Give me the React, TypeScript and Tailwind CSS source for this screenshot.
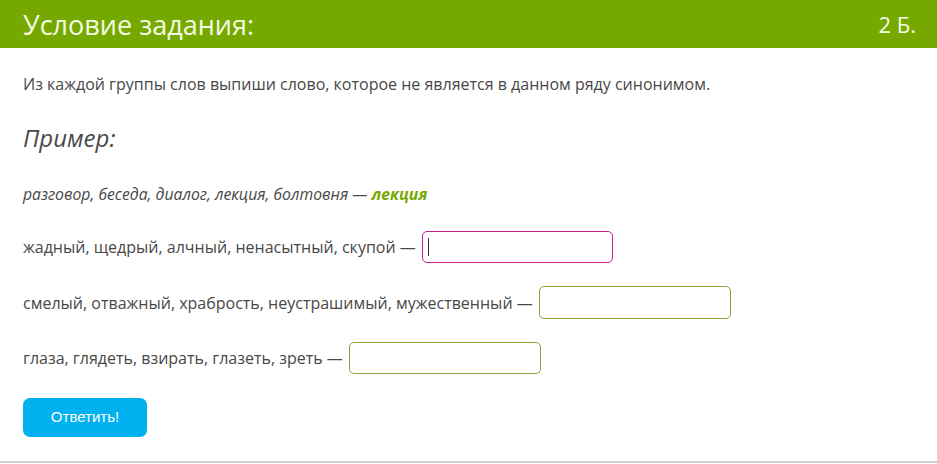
export default function App() {
  const rowText = "text-[16px] text-[#484848] leading-[24px]";
  return (
    <div className="w-[937px] h-[464px] bg-white flex flex-col" style={{ fontFamily: '"Open Sans", sans-serif' }}>
      <div className="h-[48px] bg-[#76a900] flex items-center justify-between pl-[23px] pr-[21px]">
        <span className="text-[27px] text-[#f4fbe4] leading-none">Условие задания:</span>
        <span className="text-[22px] text-[#f4fbe4] leading-none">2 Б.</span>
      </div>
      <div className="flex-1 flex flex-col px-[23px]">
        <div className={`${rowText} mt-[24px]`}>
          Из каждой группы слов выпиши слово, которое не является в данном ряду синонимом.
        </div>
        <div className="mt-[26px] text-[24px] italic text-[#484848] leading-[32px]">Пример:</div>
        <div className="mt-[29px] text-[15.75px] italic text-[#484848] leading-[22px]">
          разговор, беседа, диалог, лекция, болтовня — <span className="font-bold text-[#76a900]">лекция</span>
        </div>
        <div className="mt-[26px] flex items-center h-[32px]">
          <span className={rowText}>жадный, щедрый, алчный, ненасытный, скупой —</span>
          <div className="ml-[6px] w-[191px] h-[32px] border border-[#c8208a] rounded-[5px] flex items-center pl-[5px]">
            <div className="w-px h-[18px] bg-[#333]" />
          </div>
        </div>
        <div className="mt-[23px] flex items-center h-[33px]">
          <span className={rowText}>смелый, отважный, храбрость, неустрашимый, мужественный —</span>
          <div className="ml-[6px] w-[192px] h-[33px] border border-[#8aa83a] rounded-[5px]" />
        </div>
        <div className="mt-[23px] flex items-center h-[32px]">
          <span className={rowText}>глаза, глядеть, взирать, глазеть, зреть —</span>
          <div className="ml-[6px] w-[192px] h-[32px] border border-[#8aa83a] rounded-[5px]" />
        </div>
        <button
          className="mt-[24px] w-[124px] h-[39px] bg-[#00b1ef] rounded-[7px] text-white text-[15px] self-start"
          style={{ fontFamily: '"Liberation Sans", Arial, sans-serif' }}
        >
          Ответить!
        </button>
      </div>
      <div className="h-[2px] bg-[#d0d0d0] mb-[1px]" />
    </div>
  );
}
